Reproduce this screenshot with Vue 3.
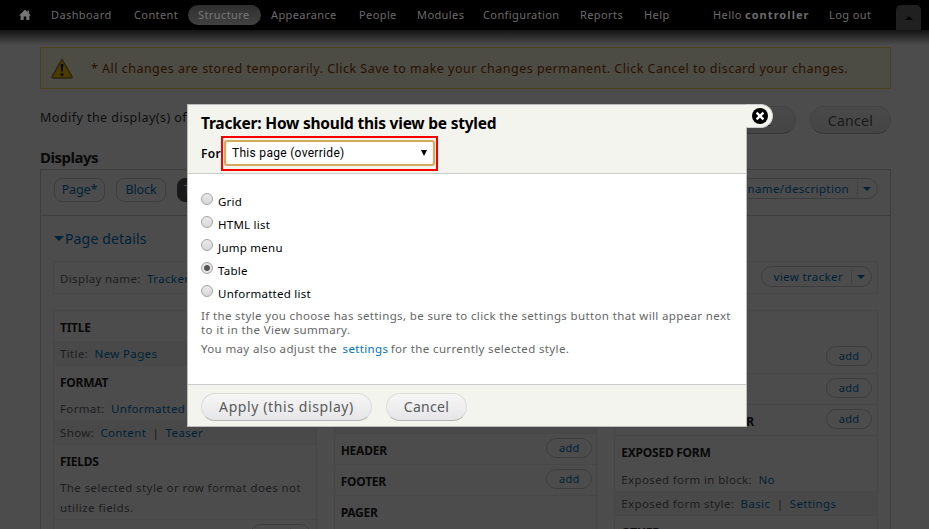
<script setup>
const menu = [
  { label: 'Dashboard', key: 'dashboard' },
  { label: 'Content', key: 'content' },
  { label: 'Structure', key: 'structure', active: true },
  { label: 'Appearance', key: 'appearance' },
  { label: 'People', key: 'people' },
  { label: 'Modules', key: 'modules' },
  { label: 'Configuration', key: 'configuration' },
  { label: 'Reports', key: 'reports' },
  { label: 'Help', key: 'help-link' },
]
const styles = [
  { label: 'Grid', key: 'grid' },
  { label: 'HTML list', key: 'html' },
  { label: 'Jump menu', key: 'jump' },
  { label: 'Table', key: 'table', checked: true },
  { label: 'Unformatted list', key: 'list' },
]
</script>

<template>
  <div class="screen">
    <nav class="toolbar">
      <svg class="home" width="12" height="12" viewBox="0 0 12 12"><path d="M6 0.6 L8.4 2.9 V1.6 H10 V4.5 L12 6.4 H10.4 V11 H7.3 V7.5 H4.7 V11 H1.6 V6.4 H0 Z" fill="#747474" /></svg>
      <span v-for="m in menu" :key="m.key" class="item" :class="[m.key, { active: m.active }]">{{ m.label }}</span>
      <span class="item hello">Hello <b>controller</b></span>
      <span class="item logout">Log out</span>
      <span class="toggle"><i class="up"></i></span>
    </nav>

    <main class="page">
      <div class="notice">
        <svg width="22" height="21" viewBox="0 0 22 21">
          <path d="M11 1.2 L21 18.6 Q21.3 20 20 20 H2 Q0.7 20 1 18.6 Z" fill="#ffc800" stroke="#8a7a3a" stroke-width="1.3" stroke-linejoin="round" />
          <path d="M9.6 6 H12.4 L11.8 13.6 H10.2 Z" fill="#241c00" /><circle cx="11" cy="16.4" r="1.5" fill="#241c00" />
        </svg>
        <span class="notice-text">* All changes are stored temporarily. Click Save to make your changes permanent. Click Cancel to discard your changes.</span>
      </div>
      <div class="modify">
        <span class="modify-text">Modify the display(s) of</span>
        <span class="button save">Save</span>
        <span class="button cancel">Cancel</span>
      </div>
      <h2>Displays</h2>
      <section class="displays">
        <div class="tabs">
          <span class="tab first">Page*</span>
          <span class="tab second">Block</span>
          <span class="tab current">T</span>
          <span class="drop top-drop"><span>edit view name/description</span><i></i></span>
        </div>
        <div class="details-title"><i class="down"></i>Page details</div>
        <div class="display-name">
          <span class="name-text">Display name: <a>Tracker</a></span>
          <span class="drop"><span>view tracker</span><i></i></span>
        </div>
        <div class="columns">
          <div class="col">
            <h3 class="t-title">Title</h3>
            <p class="shade title-row">Title: <a>New Pages</a></p>
            <h3 class="rule t-format">Format</h3>
            <p class="format-row">Format: <a>Unformatted</a></p>
            <p class="shade show-row">Show: <a>Content</a> <em>|</em> <a>Teaser</a></p>
            <h3 class="rule t-fields">Fields</h3>
            <p class="prose">The selected style or row format does not<br />utilize fields.</p>
            <div class="filter rule"><span class="drop small"><span>add</span><i></i></span></div>
          </div>
          <div class="col middle">
            <div class="spacer"></div>
            <div class="add-row rule"><h3 class="t-header">Header</h3><span class="add">add</span></div>
            <div class="add-row rule"><h3 class="t-footer">Footer</h3><span class="add">add</span></div>
            <div class="add-row rule"><h3 class="t-pager">Pager</h3></div>
          </div>
          <div class="col last">
            <div class="contextual"></div>
            <div class="add-row"><h3>Contextual filters</h3><span class="add">add</span></div>
            <div class="add-row rule"><h3>Relationships</h3><span class="add">add</span></div>
            <div class="add-row rule"><h3 class="nr">No results behavior</h3><span class="add">add</span></div>
            <h3 class="rule t-exposed">Exposed form</h3>
            <p class="block-row">Exposed form in block: <a>No</a></p>
            <p class="shade style-row">Exposed form style: <a>Basic</a> <em>|</em> <a>Settings</a></p>
            <h3 class="rule t-other">Other</h3>
          </div>
        </div>
      </section>
    </main>
    <div class="veil"></div>
    <div class="toolbar-shadow"></div>

    <div class="dialog">
      <div class="close">
        <svg width="16" height="16" viewBox="0 0 16 16"><circle cx="8" cy="8" r="8" fill="#000" /><path d="M4.6 4.6 L11.4 11.4 M11.4 4.6 L4.6 11.4" stroke="#fff" stroke-width="2.3" /></svg>
      </div>
      <header>
        <h1>Tracker: How should this view be styled</h1>
        <div class="for">
          <label>For</label>
          <div class="marker"><div class="select"><span>This page (override)</span><i></i></div></div>
        </div>
      </header>
      <div class="body">
        <div v-for="s in styles" :key="s.key" class="option">
          <span class="radio" :class="{ checked: s.checked }"></span>
          <span class="label" :class="s.key">{{ s.label }}</span>
        </div>
        <p class="help one">If the style you choose has settings, be sure to click the settings button that will appear next<br />to it in the View summary.</p>
        <p class="help two">You may also adjust the <a>settings</a> for the currently selected style.</p>
      </div>
      <footer>
        <span class="button apply">Apply (this display)</span>
        <span class="button dismiss">Cancel</span>
      </footer>
    </div>
  </div>
</template>

<style>
body { margin: 0; overflow: hidden; }
</style>

<style scoped>
* { box-sizing: border-box; }
.screen { position: relative; width: 929px; height: 529px; overflow: hidden; background: #fff; font-family: "Noto Sans", "Open Sans", sans-serif; font-size: 11.5px; letter-spacing: 0.36px; color: #666; white-space: nowrap; }
h1, h2, h3, p { margin: 0; }
a { color: #0074bd; }

.toolbar { position: relative; z-index: 3; display: flex; align-items: center; height: 30px; padding-left: 19px; background: #000; color: #6b6b6b; font-size: 11px; letter-spacing: 0.4px; }
.home { flex: none; margin-right: 10px; }
.item { flex: none; height: 20px; padding: 0 10px; line-height: 20px; }
.dashboard { width: 83px; }
.content { width: 64px; }
.structure { width: 73px; }
.appearance { width: 88px; }
.people { width: 58px; }
.modules { width: 66px; }
.configuration { width: 97px; }
.reports { width: 64px; }
.help-link { width: 69px; }
.active { border-radius: 10px; background: linear-gradient(#2f2f2f, #414141); color: #777; }
.hello { width: 116px; }
.hello b { letter-spacing: 1.05px; }
.logout { width: 77px; }
.toggle { display: flex; width: 25px; height: 25px; margin-top: 5px; align-items: center; justify-content: center; border-radius: 5px 5px 0 0; background: #202020; }
.up { border: 4px solid transparent; border-top: 0; border-bottom-color: #000; }

.page { padding: 17px 38px 0 40px; }
.notice { display: flex; align-items: center; height: 42px; padding-left: 10px; border: 1px solid #ed5; background: #fffce5; color: #840; }
.notice-text { margin-left: 18px; font-size: 12.5px; letter-spacing: 0.48px; }
.modify { display: flex; align-items: center; height: 63px; color: #333; }
.modify-text { width: 675px; font-size: 12.5px; letter-spacing: 0.46px; margin-top: -6px; }
.button { display: inline-flex; flex: none; align-items: center; justify-content: center; height: 28px; padding-bottom: 1px; border: 1px solid #ddd; border-bottom-color: #b4b4b4; border-radius: 14px; background: linear-gradient(#f6f6f6, #e6e6e9); color: #5a5a5a; font-size: 14px; letter-spacing: 0.3px; }
.modify .button { margin-top: -1px; padding-bottom: 0; }
.save { width: 81px; }
.cancel { width: 81px; margin-left: 14px; }
h2 { height: 17px; line-height: 11px; color: #222; font-size: 15px; letter-spacing: -0.5px; }
.displays { height: 400px; border: 1px solid #ccc; }
.tabs { display: flex; align-items: flex-start; height: 46px; padding: 8px 12px 0 13px; border-bottom: 1px solid #ccc; }
.tab { height: 24px; margin-right: 11px; line-height: 21px; text-align: center; border: 1px solid #ccc; border-radius: 8px; color: #0074bd; font-size: 12.5px; letter-spacing: -0.1px; }
.first { width: 51px; }
.second { width: 50px; }
.current { width: 70px; padding-left: 6px; text-align: left; border-color: #555; background: #555; color: #fff; }
.drop { display: flex; align-items: center; height: 21px; margin-left: auto; border: 1px solid #ccc; border-radius: 11px; color: #0074bd; }
.drop > span { padding: 0 8px 0 12px; }
.drop i { display: flex; align-items: center; width: 20px; height: 15px; padding-left: 5px; border-left: 1px solid #ddd; }
.drop i::after { content: ''; border: 4px solid transparent; border-bottom: 0; border-top-color: #0074bd; }
.details-title { display: flex; align-items: center; height: 45px; padding-left: 13px; color: #0074bd; font-size: 14px; letter-spacing: 0.15px; }
.down { margin-right: 1px; border: 5px solid transparent; border-bottom: 0; border-top-color: #0074bd; }
.display-name { display: flex; align-items: center; height: 33px; margin: 0 12px; padding: 0 5px 2px 6px; border: 1px solid #eee; }
.name-text { padding-top: 4px; }
a { margin-left: 3px; }
.columns { display: flex; gap: 17px; margin: 16px 12px 0; }
.col { width: 264px; height: 260px; border: 1px solid #eee; }
.col h3 { padding-left: 6px; color: #222; font-size: 12px; text-transform: uppercase; letter-spacing: -0.25px; }
.col > h3 { height: 31px; line-height: 33px; }
.col > .t-title { height: 30px; line-height: 33px; }
.col > .t-exposed { height: 32px; line-height: 33px; }
.col p { height: 24px; padding-left: 6px; line-height: 26px; }
.col .title-row { line-height: 25px; }
.col .block-row, .col .style-row { line-height: 25px; }
.rule { border-top: 1px solid #eee; }
.shade { background: #f4f4f4; }
em { font-style: normal; margin-left: 3px; }
.col .prose { height: 44px; line-height: 20px; padding-top: 3px; letter-spacing: 0.42px; }
.filter { display: flex; padding: 4px 5px; }
.filter .drop { width: 61px; }
.filter .drop > span { padding: 0 7px 0 11px; }
.spacer { height: 122px; background: linear-gradient(transparent 98px, #f4f4f4 98px); }
.add-row { display: flex; align-items: center; justify-content: space-between; height: 31px; padding-right: 5px; }
.middle .add-row { padding-right: 4px; }
.add-row h3 { padding-top: 2px; }
.add { width: 46px; height: 20px; border: 1px solid #ccc; border-radius: 10px; line-height: 18px; text-align: center; color: #0074bd; margin-top: -3px; font-size: 11px; }
.contextual { height: 31px; }

.veil { position: absolute; inset: 0; z-index: 2; background: rgba(0, 0, 0, 0.7); }
.toolbar-shadow { position: absolute; z-index: 3; top: 30px; left: 0; right: 0; height: 15px; background: linear-gradient(rgba(0, 0, 0, 0.75), transparent); }

.dialog { position: absolute; z-index: 4; left: 187px; top: 104px; width: 560px; height: 323px; border: 1px solid #bbb; background: #fff; color: #000; }
.close { position: absolute; left: 558px; top: -1px; display: flex; align-items: center; width: 27px; height: 24px; padding-left: 6px; border: 1px solid #ccc; border-left: 0; border-radius: 0 12px 12px 0; background: #f3f4ee; }
header { height: 69px; padding: 9px 0 0 13px; border-bottom: 1px solid #ccc; background: #f3f4ee; }
h1 { height: 22px; line-height: 18px; font-size: 15.5px; font-weight: bold; letter-spacing: -0.22px; }
.for { display: flex; align-items: center; height: 35px; }
.for label { width: 20px; font-weight: 600; font-size: 12px; letter-spacing: 0.3px; }
.marker { width: 217px; height: 35px; padding: 2px 1px; border: 2px solid #f60000; }
.select { display: flex; align-items: center; justify-content: space-between; width: 211px; height: 26px; padding: 0 6px; border: 2px solid #d2ac5c; border-radius: 3px; background: #fff; font-family: Roboto, sans-serif; font-size: 12px; letter-spacing: 0.3px; box-shadow: inset 0 0 1px #e5b850; }
.select i { border: 3.5px solid transparent; border-bottom: 0; border-top: 6px solid #000; }
.body { height: 210px; padding: 15px 0 0 13px; }
.option { display: flex; height: 23px; }
.radio { width: 12px; height: 12px; margin: 4px 5px 0 0; border: 1px solid #a4a4a4; border-radius: 50%; background: linear-gradient(#e9e9e9, #d8d8d8); }
.checked { background: radial-gradient(circle, #555 0 2.5px, #e4e4e4 3.5px); }
.label { line-height: 26px; letter-spacing: 0.25px; }
.help { color: #666; line-height: 14px; }
.help a { margin: 0 -1px 0 2px; }
.one { padding-top: 5px; }
.two { padding-top: 5px; }
footer { display: flex; align-items: flex-start; gap: 14px; height: 42px; padding: 8px 13px; border-top: 1px solid #ccc; background: #f3f4ee; }
.apply { width: 171px; letter-spacing: 0.6px; }
.dismiss { width: 81px; }
</style>
